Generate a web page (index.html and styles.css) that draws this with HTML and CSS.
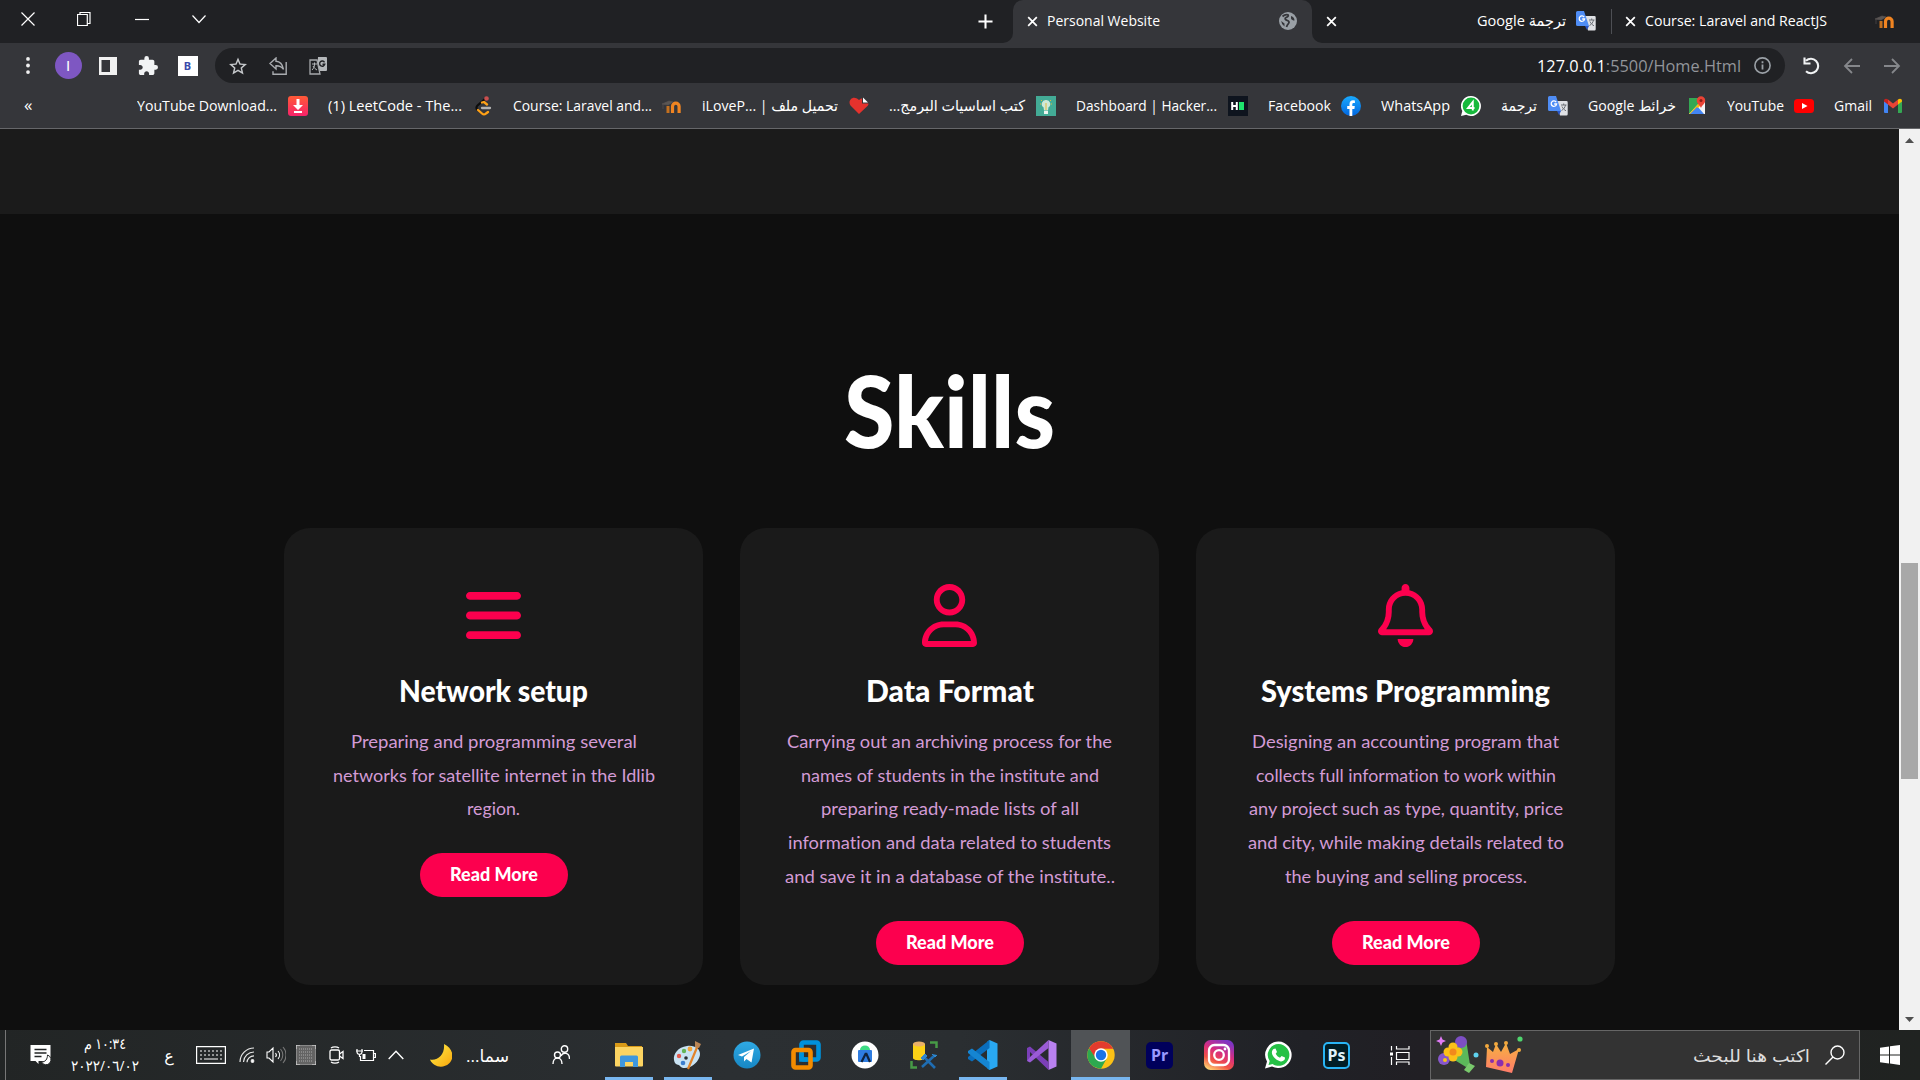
FILE: index.html
```html
<!DOCTYPE html>
<html lang="en">
<head>
<meta charset="utf-8">
<title>Personal Website</title>
<link rel="stylesheet" href="styles.css">
</head>
<body>
<svg class="defs" width="0" height="0">
  <defs>
    <linearGradient id="gTg" x1="0" y1="0" x2="0" y2="1"><stop offset="0" stop-color="#2fa9e4"/><stop offset="1" stop-color="#1787c4"/></linearGradient>
    <linearGradient id="gIg" x1="0.2" y1="1" x2="0.7" y2="0"><stop offset="0" stop-color="#fed373"/><stop offset=".3" stop-color="#f15245"/><stop offset=".6" stop-color="#d92e7f"/><stop offset="1" stop-color="#7b35c6"/></linearGradient>
    <linearGradient id="gDl" x1="0" y1="0" x2="0" y2="1"><stop offset="0" stop-color="#ff5a36"/><stop offset="1" stop-color="#f7226a"/></linearGradient>
    <linearGradient id="gFb" x1="0" y1="0" x2="0" y2="1"><stop offset="0" stop-color="#19aafe"/><stop offset="1" stop-color="#0166e0"/></linearGradient>
    <linearGradient id="gMoon" x1="0" y1="0" x2="1" y2="1"><stop offset="0" stop-color="#fff04a"/><stop offset="1" stop-color="#f9a60c"/></linearGradient>
    <linearGradient id="gCrown" x1="0" y1="0" x2="0" y2="1"><stop offset="0" stop-color="#f6b23f"/><stop offset="1" stop-color="#ff7b6b"/></linearGradient>
    <symbol id="moodle" viewBox="0 0 20 20"><path d="M10.500 17V10.500a3.300 3.300 0 0 1 6.600 0V17" fill="none" stroke="#f08421" stroke-width="3.200"/><path d="M6 17v-7" stroke="#c4701f" stroke-width="3"/><path d="M0 8l7-3 4 1-5 3zM1 8v5" fill="#5a5654" stroke="#5a5654" stroke-width=".6"/></symbol>
    <symbol id="gtrans" viewBox="0 0 20 20"><path d="M8 5h10.500a1.200 1.200 0 0 1 1.200 1.200v12a1.200 1.200 0 0 1-1.200 1.200H12z" fill="#dfe1e5"/><path d="M1.500 0H8l5 15H1.500A1.500 1.500 0 0 1 0 13.500v-12A1.500 1.500 0 0 1 1.500 0z" fill="#4f8df5"/><path d="M9 15h4l-2 4z" fill="#2a56c6"/><path d="M8.200 6.200A2.700 2.700 0 1 0 8.600 8H6.200" fill="none" stroke="#fff" stroke-width="1.300"/><path d="M13 9h5.500M15.700 7.500V9M17.500 9c-.5 2.500-2 4.500-4 5.500M14 10.500c.8 2 2.500 3.500 4 4.300" fill="none" stroke="#6b6f75" stroke-width="1"/></symbol>
    <symbol id="xmark" viewBox="0 0 12 12"><path d="M1.300 1.300l9.400 9.400M10.700 1.300l-9.400 9.400" stroke="#fff" stroke-width="1.900" fill="none"/></symbol>
  </defs>
</svg>

<div class="tabstrip">
  <div class="strip-left">
    <svg class="win w-close" viewBox="0 0 14 14"><path d="M.5.5l13 13M13.500.5l-13 13"/></svg>
    <svg class="win w-max" viewBox="0 0 14 14"><path d="M.5 2.500h9.800v11H.5zM3 2.500v-2h10v11h-2.500"/></svg>
    <svg class="win w-min" viewBox="0 0 14 14"><path d="M0 7.500h14"/></svg>
    <svg class="win w-chev" viewBox="0 0 14 14"><path d="M.5 3.500l6.500 7 6.500-7"/></svg>
    <svg class="plus" viewBox="0 0 16 16"><path d="M8 .5v15M.5 8h15"/></svg>
  </div>
  <div class="strip-active">
    <div class="tab-active">
      <svg class="x" ><use href="#xmark"/></svg>
      <span class="tt"><span class="fit" data-w="113">Personal Website</span></span>
      <svg class="globe" viewBox="0 0 18 18"><circle cx="9" cy="9" r="9" fill="#9aa0a6"/><path d="M3.500 4.500C5 3 7 2.500 9 2.800c1 1.200-.5 2.200-2 2.700s-1 2.300 1 2.800 2.500 2 1.500 3.200-1.500 2-2 3.500" fill="none" stroke="#35363a" stroke-width="1.800"/><path d="M12 4c2.500.5 3.500 2.500 3.500 4.500-1.500 0-3-.5-3.500-2zM2.200 9l3.300 2.500v3A7 7 0 0 1 2.200 9z" fill="#35363a"/></svg>
    </div>
  </div>
  <div class="strip-right">
    <svg class="x"><use href="#xmark"/></svg>
    <span class="tab2"><span class="fit" data-w="89">Google ترجمة</span></span>
    <svg class="fav"><use href="#gtrans"/></svg>
    <i class="sep"></i>
    <svg class="x"><use href="#xmark"/></svg>
    <span class="tab3"><span class="fit" data-w="182">Course: Laravel and ReactJS</span></span>
    <svg class="fav last"><use href="#moodle"/></svg>
  </div>
</div>

<div class="toolbar">
  <svg class="dots" viewBox="0 0 4 18"><g fill="#f1f1f1"><circle cx="2" cy="2" r="2"/><circle cx="2" cy="9" r="2"/><circle cx="2" cy="16" r="2"/></g></svg>
  <span class="avatar">I</span>
  <svg class="i18" viewBox="0 0 18 18"><path d="M0 0h18v18H0zM2.500 3v12h8.500V3z" fill="#f1f1f1" fill-rule="evenodd"/></svg>
  <svg class="i20" viewBox="1 1 22 22"><path fill="#f1f3f4" d="M20.500 11H19V7c0-1.100-.9-2-2-2h-4V3.500a2.500 2.500 0 0 0-5 0V5H4c-1.100 0-2 .9-2 2v3.800h1.500c1.500 0 2.700 1.200 2.700 2.700S5 16.200 3.500 16.200H2V20c0 1.100.9 2 2 2h3.800v-1.500c0-1.500 1.200-2.700 2.700-2.700s2.700 1.200 2.700 2.700V22H17c1.100 0 2-.9 2-2v-4h1.500a2.500 2.500 0 0 0 0-5z"/></svg>
  <span class="bext">B</span>
  <div class="omnibox">
    <svg class="i18" viewBox="2 2 20 19" fill="#c4c7ca"><path d="M22 9.240l-7.190-.62L12 2 9.190 8.630 2 9.240l5.460 4.730L5.820 21 12 17.270 18.180 21l-1.630-7.030L22 9.240zM12 15.400l-3.760 2.270 1-4.280-3.320-2.880 4.380-.38L12 6.100l1.710 4.040 4.380.38-3.320 2.880 1 4.280L12 15.400z"/></svg>
    <svg class="i18" viewBox="0 0 18 18" fill="none" stroke="#a9acb0" stroke-width="1.400"><path d="M17.200 5v12.200H4v-3M1 6.500L7 1v3.300c4 .2 6.500 3 7.500 8-2-2.800-4.200-3.700-7.500-3.600V12z"/></svg>
    <svg class="i18" viewBox="0 0 18 18"><path d="M9 0h8a1 1 0 0 1 1 1v12a1 1 0 0 1-1 1H8z" fill="#b4b7ba"/><path d="M1 3h7l3 14H1z" fill="#202124" stroke="#a5a8ab" stroke-width="1.300"/><path d="M3 7h5M5.500 5.500V7c0 3-1 4.500-2.500 6M4 9c1 2 2.500 3 4 4" fill="none" stroke="#b4b7ba"/><path d="M15.500 5.300A2.600 2.600 0 1 0 15.800 7.200H13.500" fill="none" stroke="#202124" stroke-width="1.400"/></svg>
    <span class="url"><span class="fit" data-w="204"><b>127.0.0.1</b>:5500/Home.Html</span></span>
    <svg class="info" viewBox="0 0 17 17"><circle cx="8.500" cy="8.500" r="7.600" fill="none" stroke="#9aa0a6" stroke-width="1.600"/><path d="M8.500 7.500v5M8.500 4.300v1.900" stroke="#9aa0a6" stroke-width="1.800"/></svg>
  </div>
  <svg class="nav" viewBox="0 0 18 18" fill="none" stroke="#f1f3f4" stroke-width="2.100"><path d="M3 3.800A7.200 7.200 0 1 1 3 14.200M1.500.5v6h6"/></svg>
  <svg class="nav" viewBox="0 0 18 18" fill="none" stroke="#85878b" stroke-width="1.800"><path d="M17 9H2M9 2L2 9l7 7"/></svg>
  <svg class="nav end" viewBox="0 0 18 18" fill="none" stroke="#85878b" stroke-width="1.800"><path d="M1 9h15M9 2l7 7-7 7"/></svg>
</div>

<div class="bookmarks">
  <span class="more">«</span>
  <div class="bm"><span class="fit" data-w="140">YouTube Download...</span><svg viewBox="0 0 20 20"><rect width="20" height="20" rx="3" fill="url(#gDl)"/><path d="M8.500 3h3v6H15l-5 5-5-5h3.500zM6 15h8v2H6z" fill="#fff"/></svg></div>
  <div class="bm"><span class="fit" data-w="134">(1) LeetCode - The...</span><svg viewBox="0 0 20 20" fill="none" stroke-width="2.300" stroke-linecap="round"><path d="M12 3L4.500 9.500a3 3 0 0 0 0 4.500" stroke="#0c0c0c"/><path d="M5 14l4 3.500a3 3 0 0 0 4 0l2-1.500M9 6.500l2-.5 3 2.500" stroke="#ffa116"/><path d="M9 12h8" stroke="#b3b3b3"/><circle cx="13.500" cy="2.500" r="1.200" stroke="#c94f4f" fill="#c94f4f"/></svg></div>
  <div class="bm"><span class="fit" data-w="139">Course: Laravel and...</span><svg><use href="#moodle"/></svg></div>
  <div class="bm"><span class="fit" data-w="136">iLoveP... | تحميل ملف</span><svg viewBox="0 0 20 20"><path d="M10 18L1.500 9.500C-1.500 5 3-.5 8 2.500L10 4l2-1.500h1v5h6.500c0 1-.5 2-1 2.500z" fill="#e5322d"/><path d="M14 1.500l5 5h-5z" fill="#fff"/></svg></div>
  <div class="bm"><span class="fit" data-w="136" dir="rtl">كتب اساسيات البرمج...</span><svg viewBox="0 0 20 20"><rect width="20" height="20" fill="#43ab96"/><path d="M10 4a4 4 0 0 1 2.500 7.300L12 14.500h-4l-.5-3.200A4 4 0 0 1 10 4z" fill="#cfe9d8"/><path d="M8 15h4v3H8z" fill="#eef6f1"/><path d="M10 7v7M4 8h1M15 8h1M5 4l1 1M15 4l-1 1" stroke="#e2b93a"/></svg></div>
  <div class="bm"><span class="fit" data-w="141">Dashboard | Hacker...</span><svg viewBox="0 0 20 20"><rect width="20" height="20" fill="#0e141e"/><path d="M4.200 6v8M8.800 6v8M4 10h5" stroke="#fff" stroke-width="2"/><path d="M11 6h5v8h-5z" fill="#1ee56d"/></svg></div>
  <div class="bm"><span class="fit" data-w="63">Facebook</span><svg viewBox="0 0 20 20"><circle cx="10" cy="10" r="10" fill="url(#gFb)"/><path d="M8.500 20v-7H6.200v-3h2.300V8c0-2.500 1.400-3.800 3.500-3.800l1.900.2v2.500h-1.200c-1.100 0-1.400.6-1.400 1.400V10h2.500l-.4 3h-2.100v7z" fill="#fff"/></svg></div>
  <div class="bm"><span class="fit" data-w="69">WhatsApp</span><svg viewBox="0 0 20 20"><path d="M10 0a10 10 0 1 1-4.800 18.800L0 20l1.300-5A10 10 0 0 1 10 0z" fill="#fff"/><circle cx="10" cy="10" r="8.400" fill="#16b93c"/><path d="M11.800 14.500V6L7 12h6.500" fill="none" stroke="#fff" stroke-width="1.900"/></svg></div>
  <div class="bm"><span class="fit" data-w="36">ترجمة</span><svg><use href="#gtrans"/></svg></div>
  <div class="bm"><span class="fit" data-w="88">Google خرائط</span><svg viewBox="0 0 20 20"><path d="M2 2h9v16H2z" fill="#34a853"/><path d="M2 18L16 3l2 2v13z" fill="#f3f4f5"/><path d="M10 10l7 8h-3l-5-6z" fill="#4285f4"/><path d="M2 18L14 5l2 2L5 18z" fill="#fbbc04"/><path d="M3 18L10 11l6 7z" fill="#4285f4"/><path d="M14 12c-1-3-4.200-4-4.200-7.500a4.200 4.200 0 0 1 8.400 0C18.200 8 15 9 14 12z" fill="#ea4335"/><circle cx="14" cy="4.500" r="1.500" fill="#8c1d16"/></svg></div>
  <div class="bm"><span class="fit" data-w="57">YouTube</span><svg viewBox="0 0 20 20"><rect y="3" width="20" height="14" rx="3.500" fill="#f00"/><path d="M8 7l5.500 3L8 13z" fill="#fff"/></svg></div>
  <div class="bm"><span class="fit" data-w="38">Gmail</span><svg viewBox="0 0 20 20"><path d="M1 4.500l4 3V17H2a1 1 0 0 1-1-1z" fill="#4285f4"/><path d="M19 4.500l-4 3V17h3a1 1 0 0 0 1-1z" fill="#34a853"/><path d="M5 3.500l5 4 5-4v5l-5 4-5-4z" fill="#ea4335"/><path d="M1 5c0-2.200 2-2.800 4-1.500v5L1 5.500z" fill="#c5221f"/><path d="M19 5c0-2.200-2-2.800-4-1.500v5l4-3z" fill="#fbbc04"/></svg></div>
</div>

<div class="viewport">
  <main>
    <div class="band"></div>
    <section class="skills">
      <h1><span class="fit" data-w="211">Skills</span></h1>
      <div class="cards">
        <article class="card">
          <svg class="cicon" viewBox="0 0 448 512"><path d="M0 96c0-17.700 14.300-32 32-32h384c17.700 0 32 14.300 32 32s-14.300 32-32 32H32C14.300 128 0 113.700 0 96zm0 160c0-17.700 14.300-32 32-32h384c17.700 0 32 14.300 32 32s-14.300 32-32 32H32c-17.700 0-32-14.300-32-32zm448 160c0 17.700-14.300 32-32 32H32c-17.700 0-32-14.300-32-32s14.300-32 32-32h384c17.700 0 32 14.300 32 32z"/></svg>
          <h2><span class="fit" data-w="189">Network setup</span></h2>
          <p><span class="fit" data-w="286">Preparing and programming several</span><br><span class="fit" data-w="322">networks for satellite internet in the Idlib</span><br><span class="fit" data-w="53">region.</span></p>
          <a class="btn"><span class="fit" data-w="88">Read More</span></a>
        </article>
        <article class="card">
          <svg class="cicon" viewBox="0 0 448 512"><path d="M272 304h-96C78.800 304 0 382.800 0 480c0 17.700 14.300 32 32 32h384c17.700 0 32-14.300 32-32 0-97.200-78.800-176-176-176zM48.900 464C56.900 401.100 110.800 352 176 352h96c65.200 0 119.100 49.100 127.100 112H48.900zM224 256c70.700 0 128-57.300 128-128S294.700 0 224 0 96 57.300 96 128s57.300 128 128 128zm0-208c44.100 0 80 35.900 80 80s-35.900 80-80 80-80-35.900-80-80 35.900-80 80-80z"/></svg>
          <h2><span class="fit" data-w="168">Data Format</span></h2>
          <p><span class="fit" data-w="325">Carrying out an archiving process for the</span><br><span class="fit" data-w="298">names of students in the institute and</span><br><span class="fit" data-w="258">preparing ready-made lists of all</span><br><span class="fit" data-w="323">information and data related to students</span><br><span class="fit" data-w="330">and save it in a database of the institute..</span></p>
          <a class="btn"><span class="fit" data-w="88">Read More</span></a>
        </article>
        <article class="card">
          <svg class="cicon" viewBox="0 0 448 512"><path d="M256 32v19.200c73 14.800 128 79.400 128 156.800v18.800c0 47 17.300 92.400 48.500 127.600l7.400 8.300c8.400 9.400 10.400 22.900 5.300 34.400S428.600 416 416 416H32c-12.600 0-24-7.400-29.200-18.900s-3.100-25 5.300-34.400l7.400-8.300C46.700 319.200 64 273.800 64 226.800V208c0-77.400 55-142 128-156.800V32c0-17.700 14.300-32 32-32s32 14.300 32 32zM224 96c-61.900 0-112 50.100-112 112v18.800c0 50.200-15.900 98.900-44.900 141.200h313.800c-29-42.300-44.900-91-44.900-141.200V208c0-61.900-50.100-112-112-112zm64 352c0 17-6.700 33.300-18.700 45.300S241 512 224 512s-33.300-6.700-45.300-18.700S160 465 160 448z"/></svg>
          <h2><span class="fit" data-w="289">Systems Programming</span></h2>
          <p><span class="fit" data-w="307">Designing an accounting program that</span><br><span class="fit" data-w="300">collects full information to work within</span><br><span class="fit" data-w="314">any project such as type, quantity, price</span><br><span class="fit" data-w="316">and city, while making details related to</span><br><span class="fit" data-w="242">the buying and selling process.</span></p>
          <a class="btn"><span class="fit" data-w="88">Read More</span></a>
        </article>
      </div>
    </section>
  </main>
  <aside class="scroll">
    <svg viewBox="0 0 9 5"><path d="M0 5L4.500 0 9 5z" fill="#505050"/></svg>
    <i class="thumb"></i>
    <svg viewBox="0 0 9 5"><path d="M0 0l4.500 5L9 0z" fill="#505050"/></svg>
  </aside>
</div>

<footer class="taskbar">
  <i class="edge"></i>
  <svg class="t-note" viewBox="0 0 20 20"><path d="M0 0h20v16l-3 3-5-3H8v3l-3-3H0z" fill="#fff"/><path d="M4 4.500h12M4 8h12M4 11.500h7" stroke="#232626" stroke-width="1.300"/><path d="M17 10a5 5 0 1 1-6 7c4 0 6-3 6-7z" fill="#fff" stroke="#232626"/></svg>
  <div class="clock"><span class="fit" data-w="42" dir="rtl">١٠:٣٤ م</span><span class="fit" data-w="68">٢٠٢٢/٠٦/٠٢</span></div>
  <span class="lang">ع</span>
  <svg class="t-kb" viewBox="0 0 30 18" fill="none" stroke="#fff"><path d="M.6.6h28.800v16.800H.6z" stroke-width="1.200"/><path d="M4 5h22M4 9h22" stroke-dasharray="2 2"/><path d="M4 13h2M8 13h14M24 13h2"/></svg>
  <svg class="t-wifi" viewBox="0 0 16 16" fill="none" stroke="#e8e8e8" stroke-width="1.200"><path d="M1 15A14 14 0 0 1 15 1M4.500 15A10.500 10.500 0 0 1 15 5M8 15.300A7 7 0 0 1 15 8.800"/><circle cx="13.500" cy="14" r="1.300" fill="#fff"/></svg>
  <svg class="t-vol" viewBox="0 0 20 18" fill="none" stroke="#fff" stroke-width="1.100"><path d="M1 6h2l4-4v14l-4-4H1zM9.500 7a3 3 0 0 1 0 4M12 5a6 6 0 0 1 0 8"/><path d="M14.500 3a9 9 0 0 1 0 12M17 1a12 12 0 0 1 0 16" stroke="#777"/></svg>
  <svg class="t-mem" viewBox="0 0 20 20"><rect x=".5" y=".5" width="19" height="19" fill="#646464" stroke="#888"/><path d="M3 4h14M3 7h14M3 10h14M3 13h14M3 16h14" stroke="#aaa" stroke-dasharray="1 1"/><path d="M0 4V0h4M16 0h4v4M0 16v4h4M16 20h4v-4" fill="none" stroke="#ddd"/></svg>
  <svg class="t-cam" viewBox="0 0 16 18" fill="none" stroke="#fff" stroke-width="1.300"><rect x="1" y="4" width="9.500" height="10" rx="1.500"/><path d="M10.500 8l3.500-2.500v7L10.500 10M2 2c2-1.500 6-1.500 8 0M2 16c2 1.500 6 1.500 8 0"/></svg>
  <svg class="t-bat" viewBox="0 0 20 14" fill="none" stroke="#fff" stroke-width="1.200"><path d="M8 2.500h9.500v10H4.500V8M18 5.500h1.400v4H18M1 1v3c0 3 5 3 5 0V1M0 3h7M3.500 6v3"/><path d="M6.500 6h3v5h-3z" fill="#fff" stroke="none"/></svg>
  <svg class="t-up" viewBox="0 0 16 10" fill="none" stroke="#fff" stroke-width="1.400"><path d="M.7 9L8 1.300 15.300 9"/></svg>
  <svg class="t-moon" viewBox="0 0 22 23"><path d="M14 0c9 4 11 14 5 19.500C13 25 3 23 0 15.500c8 1.500 15-5 14-15.500z" fill="url(#gMoon)"/></svg>
  <span class="weather"><span class="fit" data-w="43" dir="rtl">سما...</span></span>
  <svg class="t-ppl" viewBox="0 0 18 20" fill="none" stroke="#fff" stroke-width="1.400"><circle cx="5.500" cy="10" r="3"/><path d="M1 19c0-8 9-8 9 0"/><circle cx="12.500" cy="4" r="3.200"/><path d="M9 11c2-4 8.500-4 8.500 3"/></svg>
  <div class="apps">
    <div class="app run"><svg viewBox="0 0 30 30"><path d="M1 3h11l2 3h14v20H1z" fill="#d99a17"/><path d="M1 7h28v18.500a1 1 0 0 1-1 1H2a1 1 0 0 1-1-1z" fill="#fcd462"/><path d="M6 27V17a1.500 1.500 0 0 1 1.500-1.500h15A1.500 1.500 0 0 1 24 17v10h-5v-5h-8v5z" fill="#3f97dd"/></svg></div>
    <div class="app run"><svg viewBox="0 0 30 30"><path d="M14 6C5 7 0 14 1 20s5 4 6 6 5 3 10 1 10-8 10-13S22 5 14 6z" fill="#c9e3f3"/><circle cx="6" cy="16" r="2.200" fill="#e35b4f"/><circle cx="11" cy="11" r="2.200" fill="#64b557"/><circle cx="17" cy="9" r="2.400" fill="#f3a53a"/><circle cx="13" cy="18" r="1.800" fill="#2b3034"/><circle cx="10" cy="23" r="2.300" fill="#3d7fce"/><path d="M25 5L15 29" stroke="#e2842a" stroke-width="2.200"/><path d="M22 1l6 3-2 4-4-1z" fill="#b98555"/></svg></div>
    <div class="app"><svg viewBox="0 0 30 30"><circle cx="15" cy="15" r="13.500" fill="url(#gTg)"/><path d="M6 15l16-6.500-2.500 14-5-3.500-2.500 2.500v-4.500l7-6-9 5.500z" fill="#fff"/></svg></div>
    <div class="app"><svg viewBox="0 0 30 30" fill="none" stroke-width="4.600"><rect x="10.500" y="2.500" width="17" height="17" rx="2" stroke="#0091da"/><rect x="2.500" y="10" width="17" height="17.500" rx="2" stroke="#f38b00"/><path d="M10.500 13v6.500h6" stroke="#0091da"/></svg></div>
    <div class="app"><svg viewBox="0 0 30 30"><circle cx="15" cy="15" r="13.500" fill="#fff"/><rect x="8" y="10" width="14" height="12" rx="1" fill="#2f7de1"/><path d="M10 10a5 4.500 0 0 1 10 0z" fill="#3ddc84"/><path d="M16 13l-4.500 9M16 13l4 9" stroke="#10243e" stroke-width="2.200"/></svg></div>
    <div class="app"><svg viewBox="0 0 30 30"><path d="M4 4v14c0 3 12 3 12 0V4z" fill="#fbd116"/><ellipse cx="10" cy="4" rx="6" ry="2.500" fill="#eab068"/><path d="M21 2.500h6.500V8M2.500 21v6.500H8" fill="none" stroke="#479b46" stroke-width="2.500"/><path d="M13 27l12-11M14 16l12 12" stroke="#1f6db2" stroke-width="2.600"/><path d="M12 18l4-4 2 2-4 4zM23 14l3 3 2-2" fill="#2d87cf" stroke="#2d87cf"/></svg></div>
    <div class="app run"><svg viewBox="0 0 30 30"><path d="M21.500 0l8 3.500v23l-8 3.500L19 28V2z" fill="#29a8f2"/><path d="M21.500 0v8L4 21.500 0 19v-2z" fill="#0a6ebd"/><path d="M21.500 30v-8L4 8.500 0 11v2z" fill="#1585d2"/></svg></div>
    <div class="app"><svg viewBox="0 0 30 30"><path d="M21.500 0l8 3.500v23l-8 3.500z" fill="#b981f0"/><path d="M0 8l3-1.500L21.500 22v8L3 12v8L0 21z" fill="#7b3fb8"/><path d="M0 21l3 1.500L21.500 8V0L3 17z" fill="#9a5bd6"/></svg></div>
    <div class="app on"><svg viewBox="0 0 30 30"><circle cx="15" cy="15" r="13.700" fill="#fbc116"/><path d="M3.100 8.200a13.700 13.700 0 0 1 23.800 0L27 8.800H15L9 18.500z" fill="#e33b2e"/><path d="M3.100 8.200A13.700 13.700 0 0 0 15 28.700l5.500-10L9.500 18z" fill="#2da94f"/><circle cx="15" cy="15" r="6.700" fill="#fff"/><circle cx="15" cy="15" r="5.200" fill="#1a73e8"/></svg></div>
    <div class="app"><span class="adobe pr">Pr</span></div>
    <div class="app"><svg viewBox="0 0 30 30"><rect width="30" height="30" rx="6.500" fill="url(#gIg)"/><g fill="none" stroke="#fff" stroke-width="2.300"><rect x="5" y="5" width="20" height="20" rx="5.500"/><circle cx="15" cy="15" r="4.800"/></g><circle cx="21" cy="9" r="1.400" fill="#fff"/></svg></div>
    <div class="app"><svg viewBox="0 0 30 30"><path d="M15.500 1.500a13.300 13.300 0 1 1-6.500 25L2 28.500l2-7A13.300 13.300 0 0 1 15.500 1.500z" fill="#fff"/><path d="M15.500 4a10.900 10.900 0 1 1-6 20l-4 1 1.200-4A10.900 10.900 0 0 1 15.500 4z" fill="#25c146"/><path d="M10.500 9l2-.5 1.500 3.500-1.300 1.700c1 2 2.300 3.200 4.300 4.100l1.600-1.800 3.400 1.600c.3 3-2.500 4.400-5 3.700-4.500-1.300-9-6-8-10 .3-1 .8-1.800 1.500-2.300z" fill="#fff"/></svg></div>
    <div class="app"><span class="adobe ps">Ps</span></div>
  </div>
  <svg class="t-view" viewBox="0 0 20 19" fill="none" stroke="#fff" stroke-width="1.200"><path d="M1.500 0v4.500M1.500 11v8M6.500 0v3h12.500V0M6.500 6.500h12.500v7H6.500zM6.500 19v-3h12.500v3"/><path d="M0 6.500h3v3H0z" fill="#fff" stroke="none"/></svg>
  <div class="search">
    <svg class="s-art" viewBox="0 0 90 40"><path d="M5 1l1.500 3.500L10 6 6.500 7.500 5 11 3.500 7.500 0 6l3.500-1.500z" fill="#e07bf5"/><path d="M12 21l18-17 4 26-4 2z" fill="#5cb85a"/><path d="M33 28l6 3-6 7-5-3z" fill="#79c96c"/><circle cx="25" cy="7" r="6" fill="#7d4fc4"/><circle cx="8" cy="24" r="6" fill="#8757cc"/><circle cx="9" cy="25" r="2" fill="#f5c518"/><g fill="#fcc119"><circle cx="17" cy="12" r="4.500"/><circle cx="12" cy="17" r="4.500"/><circle cx="17" cy="22" r="4.500"/><circle cx="22" cy="17" r="4.500"/></g><circle cx="17" cy="17" r="3.500" fill="#f28a1c"/><circle cx="40" cy="20" r="2.500" fill="#5fd2ee"/><circle cx="84" cy="4" r="2.600" fill="#4fd56e"/><path d="M51 12l6 5 3-8 5 8 5-9 4 11 9-5-7 24-26-6z" fill="url(#gCrown)"/><g fill="#f2a93e"><circle cx="51" cy="11" r="2"/><circle cx="60" cy="9" r="2"/><circle cx="70" cy="8" r="2"/><circle cx="83" cy="15" r="2"/></g><g fill="#8a2eae"><circle cx="64" cy="28" r="3.500"/><circle cx="56" cy="26" r="2"/><circle cx="72" cy="30" r="2"/></g></svg>
    <span class="s-text"><span class="fit" data-w="117" dir="rtl">اكتب هنا للبحث</span></span>
    <svg class="s-mag" viewBox="0 0 20 20" fill="none" stroke="#fff" stroke-width="1.400"><circle cx="12.500" cy="7.500" r="6.500"/><path d="M8 12l-7.500 7.500"/></svg>
  </div>
  <svg class="t-win" viewBox="0 0 20 20" fill="#fff"><path d="M0 2.800l9-1.300v8H0zM10 1.300L20 0v9.500H10zM0 10.500h9v8l-9-1.300zM10 10.500h10V20l-10-1.400z"/></svg>
</footer>
<script src="fit.js"></script>
</body>
</html>
```
FILE: fit.js
```js
// Condense or widen each label so that it fills its slot exactly.
document.querySelectorAll('.fit').forEach(function (el) {
  var slot = Number(el.dataset.w);
  var natural = el.getBoundingClientRect().width;
  el.style.transform = 'scaleX(' + slot / natural + ')';
  el.style.marginRight = slot - natural + 'px';
});
```
FILE: styles.css
```css
* { box-sizing: border-box; }
body { margin: 0; width: 1920px; height: 1080px; overflow: hidden; background: #0f0f0f; color: #fff; font-family: "Open Sans", "Noto Sans", "DejaVu Sans", sans-serif; display: flex; flex-direction: column; }
svg { display: block; flex: none; }
.defs { position: absolute; }
.fit { display: inline-block; white-space: nowrap; transform-origin: 0 50%; flex: none; }

/* tab strip */
.tabstrip { height: 43px; display: flex; background: #35363a; font-size: 15px; }
.strip-left { width: 1013px; background: #202124; border-radius: 0 0 10px 0; display: flex; align-items: center; padding: 0 20px 0 21px; }
.win { width: 14px; height: 14px; fill: none; stroke: #fff; stroke-width: 1.2; margin-bottom: 6px; }
.w-max { margin-left: 42px; }
.w-min { margin-left: 44px; }
.w-chev { margin-left: 43px; }
.plus { width: 15px; height: 15px; margin-left: auto; fill: none; stroke: #fff; stroke-width: 2.2; }
.strip-active { width: 299px; background: linear-gradient(#202124 15px, #35363a 15px); }
.tab-active { height: 43px; background: #35363a; border-radius: 10px 10px 0 0; display: flex; align-items: center; padding: 0 15px 1px 14px; }
.x { width: 11px; height: 11px; }
.tt { margin-left: 9px; padding-bottom: 2px; }
.globe { width: 18px; height: 18px; margin-left: auto; }
.strip-right { flex: 1; background: #202124; border-radius: 0 0 0 10px; display: flex; align-items: center; padding: 0 25px 1px 14px; }
.tab2 { margin-left: 140px; padding-bottom: 2px; }
.fav { width: 20px; height: 20px; margin-left: 10px; }
.sep { width: 1px; height: 25px; background: #4d4f54; margin: 0 13px 0 15px; }
.tab3 { margin-left: 9px; padding-bottom: 2px; }
.fav.last { margin-left: auto; }

/* toolbar */
.toolbar { height: 45px; background: #35363a; display: flex; align-items: center; padding-left: 25.5px; }
.dots { width: 4px; height: 17px; }
.avatar { width: 27px; height: 27px; margin: 0 17px 0 25px; border-radius: 50%; background: #7e57c2; font: 15px/27px "Liberation Sans", sans-serif; text-align: center; }
.i18 { width: 18px; height: 18px; }
.i20 { width: 20px; height: 20px; margin: 0 20px 0 21px; }
.bext { width: 20px; height: 20px; background: #fff; color: #3949ab; font: bold 11px/20px "Noto Sans", sans-serif; text-align: center; }
.omnibox { width: 1570px; height: 35px; margin: 0 18px 0 17px; background: #202124; border-radius: 18px; display: flex; align-items: center; gap: 22px; padding: 0 14px 0 14px; }
.url { margin-left: auto; font-size: 17px; color: #92959a; }
.url b { color: #fff; font-weight: 400; }
.info { width: 17px; height: 17px; margin-left: -9px; }
.nav { width: 18px; height: 18px; margin-right: 22px; }
.nav.end { margin-right: 0; }

/* bookmarks bar */
.bookmarks { height: 41px; background: #35363a; border-bottom: 1px solid #66676a; display: flex; align-items: center; justify-content: flex-end; gap: 20px; padding: 0 17px 4px 24px; font-size: 15px; }
.more { margin-right: auto; font-size: 17px; line-height: 20px; padding-bottom: 2px; }
.bm { display: flex; align-items: center; gap: 10.75px; height: 20px; }
.bm .fit { padding-bottom: 1.500px; }
.bm svg { width: 20px; height: 20px; }

/* page */
.viewport { height: 901px; display: flex; }
main { flex: 1; }
.band { height: 85px; background: #1b1b1b; }
.skills { font-family: Lato, sans-serif; font-variant-ligatures: none; text-align: center; }
h1 { margin: 0; padding-top: 135px; height: 314px; font-size: 100px; line-height: 120px; font-weight: 900; }
.cards { display: flex; gap: 37px; margin-left: 284px; }
.card { width: 419px; height: 457px; background: #1a1a1a; border-radius: 26px; padding-top: 56px; display: flex; flex-direction: column; align-items: center; }
.cicon { width: 55px; height: 63px; fill: #fc004e; }
h2 { margin: 23px 0 0; font-size: 31px; line-height: 40px; font-weight: 900; }
.card p { margin: 15px 0 0; font-size: 17.5px; line-height: 33.7px; color: #d39bd5; }
.btn { width: 148px; height: 44px; margin-top: 27px; border-radius: 22px; background: #fc004e; font-size: 18px; line-height: 43px; font-weight: 900; }
.scroll { width: 21px; background: #f1f1f1; display: flex; flex-direction: column; align-items: center; justify-content: space-between; padding: 9px 0 8px; }
.scroll svg { width: 9px; height: 5px; }
.thumb { width: 17px; height: 216px; background: #a8a8a8; margin-top: 181px; }

/* taskbar */
.taskbar { height: 50px; display: flex; align-items: center; background: linear-gradient(90deg, #222525, #2b2f32 38%, #2a2e31 50%, #202126 68%, #211f24 74%, #202321); }
.edge { width: 1px; height: 50px; background: #777; margin-left: 5px; }
.t-note { width: 21px; height: 20px; margin-left: 24px; }
.clock { width: 68px; margin-left: 20px; display: flex; flex-direction: column; align-items: center; font-size: 15px; line-height: 22px; padding-bottom: 2px; }
.lang { width: 12px; margin-left: 24px; font-size: 16px; text-align: center; }
.t-kb { width: 30px; height: 18px; margin-left: 21px; }
.t-wifi { width: 16px; height: 16px; margin-left: 13px; }
.t-vol { width: 20px; height: 18px; margin-left: 11px; }
.t-mem { width: 20px; height: 20px; margin-left: 10px; }
.t-cam { width: 16px; height: 18px; margin-left: 13px; }
.t-bat { width: 20px; height: 14px; margin-left: 11px; }
.t-up { width: 16px; height: 10px; margin-left: 12px; }
.t-moon { width: 22px; height: 23px; margin-left: 26px; }
.weather { width: 43px; margin-left: 14px; font-size: 17px; }
.t-ppl { width: 18px; height: 20px; margin-left: 43px; }
.apps { display: flex; margin-left: 29px; }
.app { width: 59px; height: 50px; display: flex; align-items: center; justify-content: center; }
.app svg { width: 30px; height: 30px; }
.run { background: linear-gradient(#78b6ef, #78b6ef) center bottom / 48px 3px no-repeat; }
.on { background: #505356; border-bottom: 3px solid #78b6ef; padding-top: 3px; }
.adobe { width: 27px; height: 27px; border-radius: 5px; font: bold 16px/26px "Noto Sans", sans-serif; text-align: center; }
.pr { background: #00005b; color: #9999ff; }
.ps { background: #001e26; color: #dff2fa; border: 2px solid #29b5f5; line-height: 22px; }
.t-view { width: 20px; height: 19px; margin-left: 24px; }
.search { width: 430px; height: 50px; margin-left: 20px; background: #333; border: 1px solid #666; display: flex; align-items: center; padding: 0 14px 0 5px; }
.s-art { width: 90px; height: 40px; }
.s-text { margin-left: auto; font-size: 17px; color: #ddd; }
.s-mag { width: 20px; height: 20px; margin-left: 15px; }
.t-win { width: 20px; height: 20px; margin-left: 20px; }
```
